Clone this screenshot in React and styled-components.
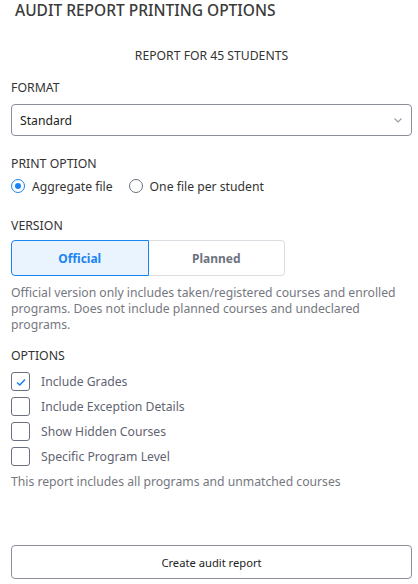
import React from "react";
import styled, { createGlobalStyle } from "styled-components";

const Global = createGlobalStyle`
  html, body { margin: 0; padding: 0; background: #fff; }
  body { font-family: "Noto Sans", "Open Sans", sans-serif; color: #333; }
  * { box-sizing: border-box; }
`;

const Page = styled.div`
  width: 418px;
  height: 584px;
  display: flex;
  flex-direction: column;
  padding: 0 6px 0 11px;
`;

const Title = styled.h1`
  margin: 0 0 0 4px;
  font-size: 15.5px;
  line-height: 20px;
  font-weight: 500;
  color: #3a3a3a;
`;

const Centered = styled.div`
  margin-top: 28px;
  text-align: center;
  font-size: 12.2px;
  line-height: 16px;
  color: #333;
`;

const Label = styled.div`
  margin-top: ${(p) => p.$mt}px;
  font-size: 12.3px;
  line-height: 16px;
  color: #333;
`;

const SelectBox = styled.div`
  margin-top: 8px;
  height: 32px;
  border: 1px solid #8b8f9c;
  border-radius: 4px;
  display: flex;
  align-items: center;
  justify-content: space-between;
  padding: 0 7px 0 8px;
  font-size: 12.2px;
  color: #222;
`;

const RadioRow = styled.div`
  margin-top: 4px;
  height: 20px;
  display: flex;
  align-items: center;
  gap: 16px;
`;

const RadioItem = styled.label`
  display: flex;
  align-items: center;
  gap: 7px;
  font-size: 12.2px;
  color: #333;
`;

const RadioCircle = styled.span`
  width: 14px;
  height: 14px;
  border-radius: 50%;
  border: 1px solid ${(p) => (p.$on ? "#1a84f2" : "#6b7080")};
  display: flex;
  align-items: center;
  justify-content: center;
  &::after {
    content: "";
    width: 6px;
    height: 6px;
    border-radius: 50%;
    background: ${(p) => (p.$on ? "#1a84f2" : "transparent")};
  }
`;

const Toggle = styled.div`
  margin-top: 6px;
  width: 274px;
  height: 36px;
  display: flex;
`;

const Seg = styled.div`
  flex: 1;
  display: flex;
  align-items: center;
  justify-content: center;
  font-size: 12px;
  font-weight: 700;
  color: ${(p) => (p.$on ? "#1a84f2" : "#6e7380")};
  background: ${(p) => (p.$on ? "#eaf4fe" : "#fff")};
  border: 1px solid ${(p) => (p.$on ? "#1a84f2" : "#dcdde2")};
  border-radius: ${(p) => (p.$first ? "4px 0 0 4px" : "0 4px 4px 0")};
  ${(p) => (!p.$first ? "border-left: none;" : "")}
`;

const Help = styled.p`
  margin: ${(p) => p.$mt}px 0 0;
  font-size: 12.2px;
  line-height: 16px;
  color: #757780;
`;

const CheckList = styled.div`
  margin-top: 5px;
  display: flex;
  flex-direction: column;
`;

const CheckRow = styled.label`
  height: 25px;
  display: flex;
  align-items: center;
  gap: 11px;
  font-size: 12.2px;
  color: #5f6472;
`;

const Box = styled.span`
  width: 19px;
  height: 19px;
  border: 1px solid #6b7080;
  border-radius: 3px;
  display: flex;
  align-items: center;
  justify-content: center;
`;

const Button = styled.button`
  margin-top: 55px;
  width: 401px;
  height: 34px;
  border: 1px solid #8b8f9c;
  border-radius: 4px;
  background: #fff;
  font-family: inherit;
  font-size: 11.2px;
  color: #222;
`;

const options = [
  { label: "Include Grades", on: true },
  { label: "Include Exception Details" },
  { label: "Show Hidden Courses" },
  { label: "Specific Program Level" },
];

export default function App() {
  return (
    <>
      <Global />
      <Page>
        <Title>AUDIT REPORT PRINTING OPTIONS</Title>
        <Centered>REPORT FOR 45 STUDENTS</Centered>
        <Label $mt={16}>FORMAT</Label>
        <SelectBox>
          <span>Standard</span>
          <svg width="12" height="12" viewBox="0 0 12 12">
            <path d="M2.5 4.5 L6 8 L9.5 4.5" fill="none" stroke="#9a9ea8" strokeWidth="1.2" />
          </svg>
        </SelectBox>
        <Label $mt={20}>PRINT OPTION</Label>
        <RadioRow>
          <RadioItem>
            <RadioCircle $on />
            Aggregate file
          </RadioItem>
          <RadioItem>
            <RadioCircle />
            One file per student
          </RadioItem>
        </RadioRow>
        <Label $mt={22}>VERSION</Label>
        <Toggle>
          <Seg $on $first>Official</Seg>
          <Seg>Planned</Seg>
        </Toggle>
        <Help $mt={9}>
          Official version only includes taken/registered courses and enrolled programs. Does not include planned courses and undeclared programs.
        </Help>
        <Label $mt={15}>OPTIONS</Label>
        <CheckList>
          {options.map((o) => (
            <CheckRow key={o.label}>
              <Box>
                {o.on && (
                  <svg width="12" height="12" viewBox="0 0 12 12">
                    <path d="M2 6.5 L4.8 9 L10 3.5" fill="none" stroke="#1a84f2" strokeWidth="1.6" />
                  </svg>
                )}
              </Box>
              {o.label}
            </CheckRow>
          ))}
        </CheckList>
        <Help $mt={5}>This report includes all programs and unmatched courses</Help>
        <Button>Create audit report</Button>
      </Page>
    </>
  );
}
